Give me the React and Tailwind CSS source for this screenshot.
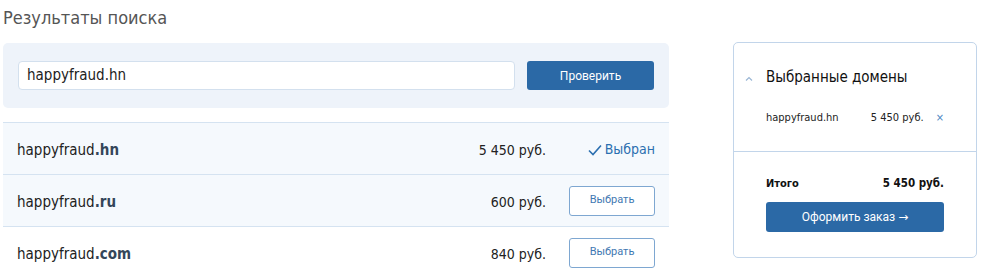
export default function App() {
  const rows = [
    { name: "happyfraud", tld: ".hn", price: "5 450 руб.", selected: true, bg: "bg-[#f5f9fd]" },
    { name: "happyfraud", tld: ".ru", price: "600 руб.", selected: false, bg: "bg-[#f5f9fd]" },
    { name: "happyfraud", tld: ".com", price: "840 руб.", selected: false, bg: "bg-white" },
  ];
  return (
    <div className="w-[1000px] h-[275px] overflow-hidden bg-white flex items-start gap-[64px] pl-[3px] font-['DejaVu_Sans_Condensed','DejaVu_Sans',sans-serif]">
      <div className="w-[666px] shrink-0">
        <h1 className="text-[18px] leading-[22px] text-[#555] pt-[7px] h-[43px]">Результаты поиска</h1>
        <div className="bg-[#eef3fa] rounded-[5px] h-[65px] flex items-center gap-[12px] px-[15px]">
          <div className="flex-1 h-[29px] bg-white border border-[#d3e0ee] rounded-[4px] flex items-center px-[8px] text-[15px] text-[#222]">
            happyfraud.hn
          </div>
          <button className="w-[127px] h-[29px] bg-[#2b69a6] rounded-[3px] text-white text-[12px] font-['Roboto',sans-serif]">
            Проверить
          </button>
        </div>
        <div className="mt-[14px] border-t border-[#d5e3f1]">
          {rows.map((r, i) => (
            <div key={i} className={`${r.bg} h-[52px] border-b border-[#d5e3f1] flex items-center pl-[14px] pr-[14px]`}>
              <div className="flex-1 text-[15px] text-[#222] pt-[3px]">
                {r.name}
                <span className="font-bold text-[#34465a]">{r.tld}</span>
              </div>
              <div className="text-[14px] text-[#222] whitespace-nowrap pt-[3px]">{r.price}</div>
              <div className="w-[86px] ml-[23px] flex justify-end">
                {r.selected ? (
                  <span className="flex items-center gap-[3px] text-[#2b6fb0] text-[14px] pt-[2px]">
                    <svg width="14" height="12" viewBox="0 0 14 12" fill="none">
                      <path d="M1 6.5 L5 10.5 L13 1.5" stroke="#2b6fb0" strokeWidth="1.6" />
                    </svg>
                    Выбран
                  </span>
                ) : (
                  <button className="w-[86px] h-[30px] bg-white border border-[#7ea7d1] rounded-[3px] text-[#3f78b2] text-[11px] font-['Roboto',sans-serif]">
                    Выбрать
                  </button>
                )}
              </div>
            </div>
          ))}
        </div>
      </div>
      <div className="mt-[42px] w-[244px] h-[216px] shrink-0 border border-[#c2d5ea] rounded-[5px]">
        <div className="px-[32px] pt-[24px] relative">
          <svg className="absolute left-[11px] top-[33px]" width="8" height="6" viewBox="0 0 8 6" fill="none">
            <path d="M1 4.5 L4 1.5 L7 4.5" stroke="#9ab6d4" strokeWidth="1.2" />
          </svg>
          <div className="text-[15px] text-[#111] leading-[20px]">Выбранные домены</div>
          <div className="flex items-center text-[11px] text-[#222] mt-[23px] h-[16px] whitespace-nowrap">
            <span className="w-[105px]">happyfraud.hn</span>
            <span>5 450 руб.</span>
            <span className="ml-[12px] text-[#4d86c2] text-[11px]">×</span>
          </div>
        </div>
        <div className="mt-[25px] border-t border-[#c2d5ea]"></div>
        <div className="px-[32px] pt-[24px]">
          <div className="flex justify-between items-center text-[11px] font-bold text-[#111] h-[16px]">
            <span>Итого</span>
            <span className="text-[11.5px]">5 450 руб.</span>
          </div>
          <button className="mt-[10px] w-full h-[30px] bg-[#2b69a6] rounded-[3px] text-white text-[12px] font-['Roboto',sans-serif]">
            Оформить заказ <span className="font-['DejaVu_Sans',sans-serif] text-[12px]">→</span>
          </button>
        </div>
      </div>
    </div>
  );
}
